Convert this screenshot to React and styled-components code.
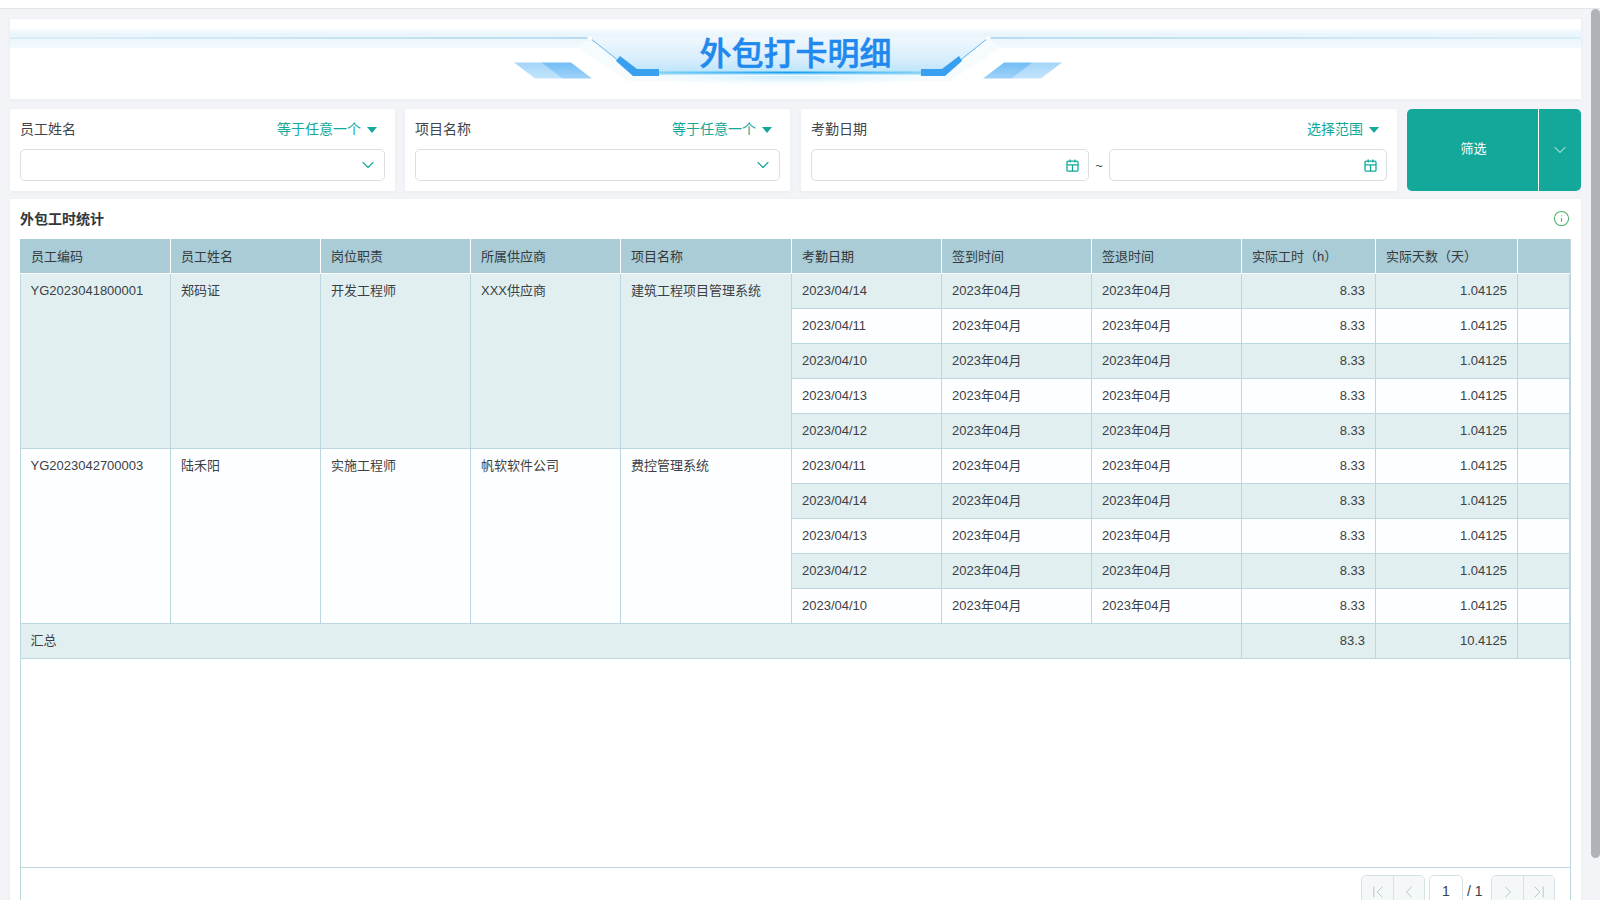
import React from 'react';
import styled, { createGlobalStyle } from 'styled-components';
import { ChevronDown, ChevronFirst, ChevronLast, ChevronLeft, ChevronRight, Info } from 'lucide-react';

const GlobalStyle = createGlobalStyle`
  html, body {
    margin: 0;
    padding: 0;
    height: 900px;
    overflow: hidden;
    background: #f2f4f7;
  }
  * {
    box-sizing: border-box;
  }
`;

const TEAL = '#13a89a';

const Page = styled.div`
  position: relative;
  width: 1600px;
  height: 900px;
  overflow: hidden;
  background: #f2f4f7;
  color: #3b4045;
  font-family: "Liberation Sans", "Noto Sans CJK SC", sans-serif;
  font-size: 13px;
`;

const TopStrip = styled.div`
  height: 9px;
  background: #fff;
  border-bottom: 1px solid #e3e6e9;
`;

const Scrollbar = styled.div`
  position: absolute;
  top: 9px;
  right: 0;
  width: 9px;
  height: 849px;
  border-radius: 5px;
  background: #b0b2b7;
`;

const Main = styled.main`
  width: 1591px;
  padding: 10px 10px 0;
  display: flex;
  flex-direction: column;
  gap: 10px;
`;

const Banner = styled.header`
  position: relative;
  height: 80px;
  padding-top: 15px;
  background: #fff;
  box-shadow: 0 1px 4px rgba(40, 60, 90, 0.05);
  text-align: center;
`;

const BannerArt = styled.svg`
  position: absolute;
  top: 0;
  left: 0;
`;

const BannerTitle = styled.h1`
  position: relative;
  margin: 0;
  font-size: 32px;
  line-height: 40px;
  font-weight: 500;
  -webkit-text-stroke: 0.5px #2088ee;
  color: #2088ee;
`;

const FilterRow = styled.section`
  display: grid;
  grid-template-columns: 385px 385px 1fr 174px;
  gap: 10px;
  height: 80px;
`;

const FilterCard = styled.div`
  padding: 10px;
  background: #fff;
  border-radius: 2px;
  box-shadow: 0 1px 4px rgba(40, 60, 90, 0.05);
  &:nth-child(3) {
    margin-left: 1px;
  }
`;

const FilterHead = styled.div`
  display: flex;
  justify-content: space-between;
  align-items: center;
  height: 20px;
  padding-right: 8px;
  font-size: 14px;
  line-height: 18px;
  color: #3f4449;
`;

const Mode = styled.span`
  display: flex;
  align-items: center;
  gap: 6px;
  color: ${TEAL};
`;

const Caret = styled.i`
  width: 0;
  height: 0;
  margin-top: 2px;
  border-left: 5px solid transparent;
  border-right: 5px solid transparent;
  border-top: 6px solid ${TEAL};
`;

const Field = styled.div`
  flex: 1;
  display: flex;
  justify-content: flex-end;
  align-items: center;
  height: 32px;
  padding-right: ${(p) => p.$pad}px;
  background: #fff;
  border: 1px solid #dcdfe2;
  border-radius: 5px;
  color: ${TEAL};
`;

const FieldRow = styled.div`
  display: flex;
  align-items: center;
  margin-top: 10px;
`;

const Tilde = styled.span`
  width: 20px;
  text-align: center;
  color: #444;
`;

const FilterButton = styled.div`
  display: flex;
  background: ${TEAL};
  border-radius: 5px;
  color: #fff;
`;

const ButtonLabel = styled.div`
  flex: 1;
  display: flex;
  justify-content: center;
  align-items: center;
  padding: 0 0 2px 2px;
  line-height: 18px;
  border-right: 1px solid #fff;
`;

const ButtonArrow = styled.div`
  width: 42px;
  display: flex;
  justify-content: center;
  align-items: center;
`;

const TableCard = styled.section`
  height: 720px;
  padding: 0 10px;
  background: #fff;
  box-shadow: 0 1px 4px rgba(40, 60, 90, 0.05);
`;

const TableHead = styled.div`
  display: flex;
  justify-content: space-between;
  align-items: center;
  height: 40px;
  padding: 0 1px 1px 0;
  font-size: 14px;
  line-height: 18px;
  font-weight: 700;
  color: #32373b;
`;

const Frame = styled.div`
  display: flex;
  flex-direction: column;
  height: 678px;
  border-right: 1px solid #bcd7dd;
  border-left: 1px solid #bcd7dd;
`;

const Grid = styled.table`
  width: 1549px;
  margin-left: -1px;
  table-layout: fixed;
  border-collapse: collapse;
`;

const Th = styled.th`
  height: 34px;
  padding: 2px 10px 0;
  background: #a9ccd6;
  border-left: 1px solid #fff;
  border-bottom: 1px solid #fff;
  font-weight: 400;
  text-align: left;
  line-height: 31px;
  color: #343a3e;
  &:first-child {
    border-left-color: #a9ccd6;
  }
`;

const Td = styled.td`
  height: 35px;
  padding: 0 10px;
  background: ${(p) => (p.$shade ? '#e1eff1' : '#fdfeff')};
  border: 1px solid #bcd7dd;
  text-align: ${(p) => (p.$num ? 'right' : 'left')};
  vertical-align: ${(p) => (p.$top ? 'top' : 'middle')};
  line-height: 33px;
  &:first-child {
    border-left: 0;
  }
`;

const Spacer = styled.div`
  flex: 1;
`;

const Pager = styled.footer`
  display: flex;
  justify-content: flex-end;
  align-items: flex-start;
  height: 50px;
  padding: 7px 15px 0 0;
  border-top: 1px solid #bcd7dd;
`;

const PageGroup = styled.div`
  display: flex;
  border: 1px solid #d5e3e7;
  border-radius: 5px;
  overflow: hidden;
`;

const PageButton = styled.div`
  display: flex;
  justify-content: center;
  align-items: center;
  width: 31px;
  height: 32px;
  background: #f4f8f9;
  color: #a9b2b7;
  & + & {
    border-left: 1px solid #d5e3e7;
  }
`;

const PageInput = styled.div`
  width: 34px;
  height: 32px;
  margin-left: 4px;
  border: 1px solid #d5e3e7;
  border-radius: 5px;
  background: #fff;
  text-align: center;
  line-height: 31px;
  font-size: 14px;
`;

const PageTotal = styled.span`
  width: 28px;
  padding-left: 4px;
  line-height: 32px;
  font-size: 14px;
`;

const columns = [
  ['员工编码', 150],
  ['员工姓名', 150],
  ['岗位职责', 150],
  ['所属供应商', 150],
  ['项目名称', 171],
  ['考勤日期', 150],
  ['签到时间', 150],
  ['签退时间', 150],
  ['实际工时（h）', 134],
  ['实际天数（天）', 142],
  ['', 52],
];

const groups = [
  {
    code: 'YG2023041800001',
    name: '郑码证',
    job: '开发工程师',
    vendor: 'XXX供应商',
    project: '建筑工程项目管理系统',
    shade: true,
    dates: ['2023/04/14', '2023/04/11', '2023/04/10', '2023/04/13', '2023/04/12'],
    start: 0,
  },
  {
    code: 'YG2023042700003',
    name: '陆禾阳',
    job: '实施工程师',
    vendor: '帆软软件公司',
    project: '费控管理系统',
    shade: false,
    dates: ['2023/04/11', '2023/04/14', '2023/04/13', '2023/04/12', '2023/04/10'],
    start: 5,
  },
];

const CalendarIcon = () => (
  <svg width="13" height="13" viewBox="0 0 13 13" fill="none" stroke="currentColor" strokeWidth="1.3">
    <rect x="1" y="2.2" width="11" height="10" rx="1.2" />
    <path d="M1 5.8h11M4.2 0.6v3M8.8 0.6v3M6.5 5.8v6.4" />
  </svg>
);

const BannerDrawing = () => (
  <BannerArt width="1571" height="80" viewBox="10 19 1571 80">
    <defs>
      <linearGradient id="band" x1="0" y1="0" x2="0" y2="1">
        <stop offset="0" stopColor="#ffffff" />
        <stop offset="0.3" stopColor="#e9f5fc" />
        <stop offset="1" stopColor="#f3f9fd" />
      </linearGradient>
      <linearGradient id="rule" x1="0" y1="0" x2="1" y2="0">
        <stop offset="0" stopColor="#dbeef8" />
        <stop offset="1" stopColor="#b7dcf1" />
      </linearGradient>
      <linearGradient id="ruleBack" x1="1" y1="0" x2="0" y2="0">
        <stop offset="0" stopColor="#dbeef8" />
        <stop offset="1" stopColor="#b7dcf1" />
      </linearGradient>
      <linearGradient id="plate" x1="0" y1="0" x2="0" y2="1">
        <stop offset="0" stopColor="#eff7fd" />
        <stop offset="0.6" stopColor="#d6edfc" />
        <stop offset="1" stopColor="#b4e3fb" />
      </linearGradient>
      <linearGradient id="beam" x1="0" y1="0" x2="1" y2="0">
        <stop offset="0" stopColor="#7fd0f5" />
        <stop offset="0.5" stopColor="#169ef0" />
        <stop offset="1" stopColor="#7fd0f5" />
      </linearGradient>
      <linearGradient id="chip" x1="0" y1="0" x2="0" y2="1">
        <stop offset="0" stopColor="#72bdf6" />
        <stop offset="1" stopColor="#a0d3f8" />
      </linearGradient>
      <linearGradient id="chipLight" x1="0" y1="0" x2="0" y2="1">
        <stop offset="0" stopColor="#a3d5f9" />
        <stop offset="1" stopColor="#c4e4fb" />
      </linearGradient>
      <radialGradient id="glow" cx="0.5" cy="0" r="0.6">
        <stop offset="0" stopColor="#c6ecfc" />
        <stop offset="1" stopColor="#ffffff" stopOpacity="0" />
      </radialGradient>
    </defs>
    <rect x="10" y="28" width="1571" height="20" fill="url(#band)" />
    <polygon points="578,48 590,38 988,38 1000,48 950,81 628,81" fill="#f6fbfe" />
    <rect x="10" y="37" width="580" height="2" fill="url(#rule)" />
    <rect x="988" y="37" width="593" height="2" fill="url(#ruleBack)" />
    <rect x="640" y="76" width="300" height="20" fill="url(#glow)" />
    <polygon points="590,38 988,38 944,75 636,75" fill="url(#plate)" />
    <path d="M590 38L620 62M988 38L958 62" stroke="#62b8ee" strokeWidth="1" />
    <circle cx="590" cy="38" r="2.5" fill="#fff" stroke="#d6eaf7" strokeWidth="0.5" />
    <circle cx="988" cy="38" r="2.5" fill="#fff" stroke="#d6eaf7" strokeWidth="0.5" />
    <polygon points="620,56 637,69 659,69 659,76 633,76 616,61" fill="#39a0f0" />
    <polygon points="959,56 942,69 921,69 921,76 945,76 962,61" fill="#39a0f0" />
    <rect x="659" y="71.5" width="262" height="2" fill="url(#beam)" />
    <polygon points="514,62.5 541,62.5 562,78.5 535,78.5" fill="url(#chipLight)" />
    <polygon points="541,62.5 571,62.5 592,78.5 562,78.5" fill="url(#chip)" />
    <polygon points="1004,62.5 1033,62.5 1012,78.5 983,78.5" fill="url(#chip)" />
    <polygon points="1033,62.5 1062,62.5 1041,78.5 1012,78.5" fill="url(#chipLight)" />
  </BannerArt>
);

const Filter = ({ label, mode, children }) => (
  <FilterCard>
    <FilterHead>
      {label}
      <Mode>
        {mode}
        <Caret />
      </Mode>
    </FilterHead>
    <FieldRow>{children}</FieldRow>
  </FilterCard>
);

const App = () => (
  <Page>
    <GlobalStyle />
    <TopStrip />
    <Scrollbar />
    <Main>
      <Banner>
        <BannerDrawing />
        <BannerTitle>外包打卡明细</BannerTitle>
      </Banner>

      <FilterRow>
        <Filter label="员工姓名" mode="等于任意一个">
          <Field $pad={6}>
            <ChevronDown size={20} strokeWidth={1.3} />
          </Field>
        </Filter>
        <Filter label="项目名称" mode="等于任意一个">
          <Field $pad={6}>
            <ChevronDown size={20} strokeWidth={1.3} />
          </Field>
        </Filter>
        <Filter label="考勤日期" mode="选择范围">
          <Field $pad={9}>
            <CalendarIcon />
          </Field>
          <Tilde>~</Tilde>
          <Field $pad={9}>
            <CalendarIcon />
          </Field>
        </Filter>
        <FilterButton>
          <ButtonLabel>筛选</ButtonLabel>
          <ButtonArrow>
            <ChevronDown size={20} strokeWidth={1.1} />
          </ButtonArrow>
        </FilterButton>
      </FilterRow>

      <TableCard>
        <TableHead>
          外包工时统计
          <Info size={17} strokeWidth={1.5} color="#4caf6a" />
        </TableHead>
        <Frame>
          <Grid>
            <colgroup>
              {columns.map(([title, width], i) => (
                <col key={i} style={{ width }} />
              ))}
            </colgroup>
            <thead>
              <tr>
                {columns.map(([title], i) => (
                  <Th key={i}>{title}</Th>
                ))}
              </tr>
            </thead>
            <tbody>
              {groups.map((g) =>
                g.dates.map((date, i) => {
                  const shade = (g.start + i) % 2 === 0;
                  return (
                    <tr key={g.code + date}>
                      {i === 0 && (
                        <>
                          <Td rowSpan={5} $shade={g.shade} $top>{g.code}</Td>
                          <Td rowSpan={5} $shade={g.shade} $top>{g.name}</Td>
                          <Td rowSpan={5} $shade={g.shade} $top>{g.job}</Td>
                          <Td rowSpan={5} $shade={g.shade} $top>{g.vendor}</Td>
                          <Td rowSpan={5} $shade={g.shade} $top>{g.project}</Td>
                        </>
                      )}
                      <Td $shade={shade}>{date}</Td>
                      <Td $shade={shade}>2023年04月</Td>
                      <Td $shade={shade}>2023年04月</Td>
                      <Td $shade={shade} $num>8.33</Td>
                      <Td $shade={shade} $num>1.04125</Td>
                      <Td $shade={shade} />
                    </tr>
                  );
                })
              )}
              <tr>
                <Td colSpan={8} $shade>汇总</Td>
                <Td $shade $num>83.3</Td>
                <Td $shade $num>10.4125</Td>
                <Td $shade />
              </tr>
            </tbody>
          </Grid>
          <Spacer />
          <Pager>
            <PageGroup>
              <PageButton>
                <ChevronFirst size={20} strokeWidth={0.9} />
              </PageButton>
              <PageButton>
                <ChevronLeft size={20} strokeWidth={0.9} />
              </PageButton>
            </PageGroup>
            <PageInput>1</PageInput>
            <PageTotal>/ 1</PageTotal>
            <PageGroup>
              <PageButton>
                <ChevronRight size={20} strokeWidth={0.9} />
              </PageButton>
              <PageButton>
                <ChevronLast size={20} strokeWidth={0.9} />
              </PageButton>
            </PageGroup>
          </Pager>
        </Frame>
      </TableCard>
    </Main>
  </Page>
);

export default App;
